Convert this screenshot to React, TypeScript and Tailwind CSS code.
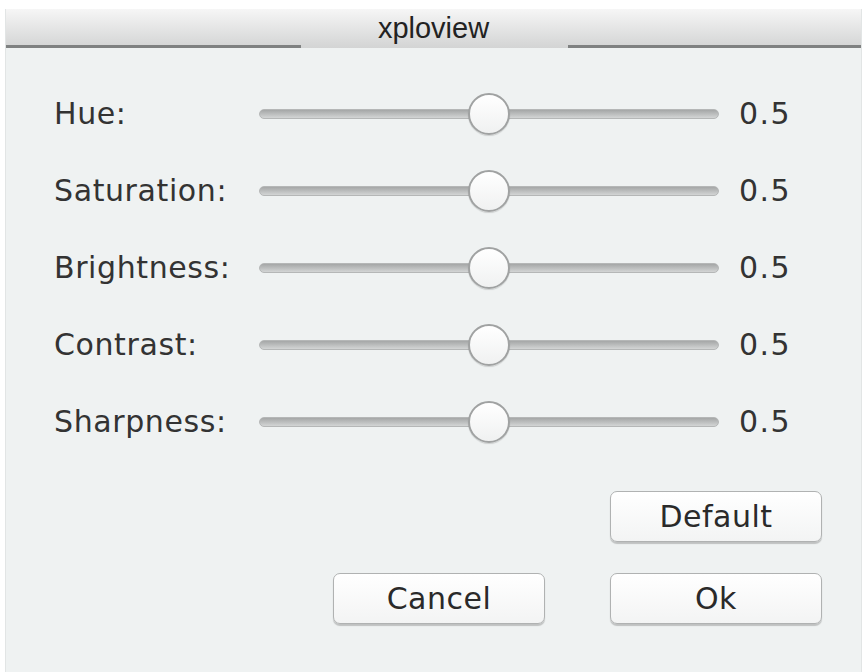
const rows = ["Hue:", "Saturation:", "Brightness:", "Contrast:", "Sharpness:"];

const Slider = ({ value }: { value: number }) => {
  return (
    <div className="relative w-[460px] h-[42px] flex items-center">
      <div className="w-full h-[10px] rounded-full bg-gradient-to-b from-[#a5a7a7] to-[#d3d5d5] border border-[#b5b7b7]" />
      <div
        className="absolute top-0 w-[42px] h-[42px] -ml-[21px] rounded-full border-2 border-[#a0a2a2] bg-gradient-to-b from-[#ffffff] to-[#f0f1f1] shadow-[0_1px_1px_rgba(0,0,0,0.15)]"
        style={{ left: `${value * 100}%` }}
      />
    </div>
  );
};

const DialogButton = ({ label }: { label: string }) => {
  return (
    <button className="w-[212px] h-[51px] rounded-[7px] border border-[#b0b2b2] bg-gradient-to-b from-[#ffffff] to-[#f3f4f4] shadow-[0_2px_1px_rgba(0,0,0,0.2)] text-[30px] tracking-[0.5px] text-[#2a2a2a] font-['DejaVu_Sans',sans-serif]">
      {label}
    </button>
  );
};

export default function App() {
  return (
    <div className="w-[867px] h-[672px] bg-white pt-[9px] pl-[5px] overflow-hidden">
      <div className="w-[857px] h-[663px] flex flex-col bg-[#eff2f2] border-l border-r border-[#e2e5e5]">
        {/* Title bar */}
        <div className="h-[39px] shrink-0 flex flex-col bg-gradient-to-b from-[#f6f6f6] to-[#d3d4d4]">
          <div className="flex-1 min-h-0 flex items-center justify-center text-[29px] leading-none text-[#222] font-['Liberation_Sans',sans-serif] pt-[3px]">
            xploview
          </div>
          <div className="flex h-[3px] shrink-0">
            <div className="w-[295px] bg-[#7f8181]" />
            <div className="flex-1" />
            <div className="w-[293px] bg-[#7f8181]" />
          </div>
        </div>

        {/* Sliders */}
        <div className="pt-[27px] pl-[48px] flex flex-col font-['DejaVu_Sans',sans-serif] text-[#333]">
          {rows.map((label) => (
            <div key={label} className="h-[77px] flex items-center">
              <div className="w-[205px] text-[30px] tracking-[0.6px]">{label}</div>
              <Slider value={0.5} />
              <div className="ml-[20px] text-[30px] tracking-[1.5px]">0.5</div>
            </div>
          ))}
        </div>

        {/* Buttons */}
        <div className="mt-[31px] pr-[39px] flex flex-col items-end gap-[31px]">
          <DialogButton label="Default" />
          <div className="flex gap-[65px]">
            <DialogButton label="Cancel" />
            <DialogButton label="Ok" />
          </div>
        </div>
      </div>
    </div>
  );
}
